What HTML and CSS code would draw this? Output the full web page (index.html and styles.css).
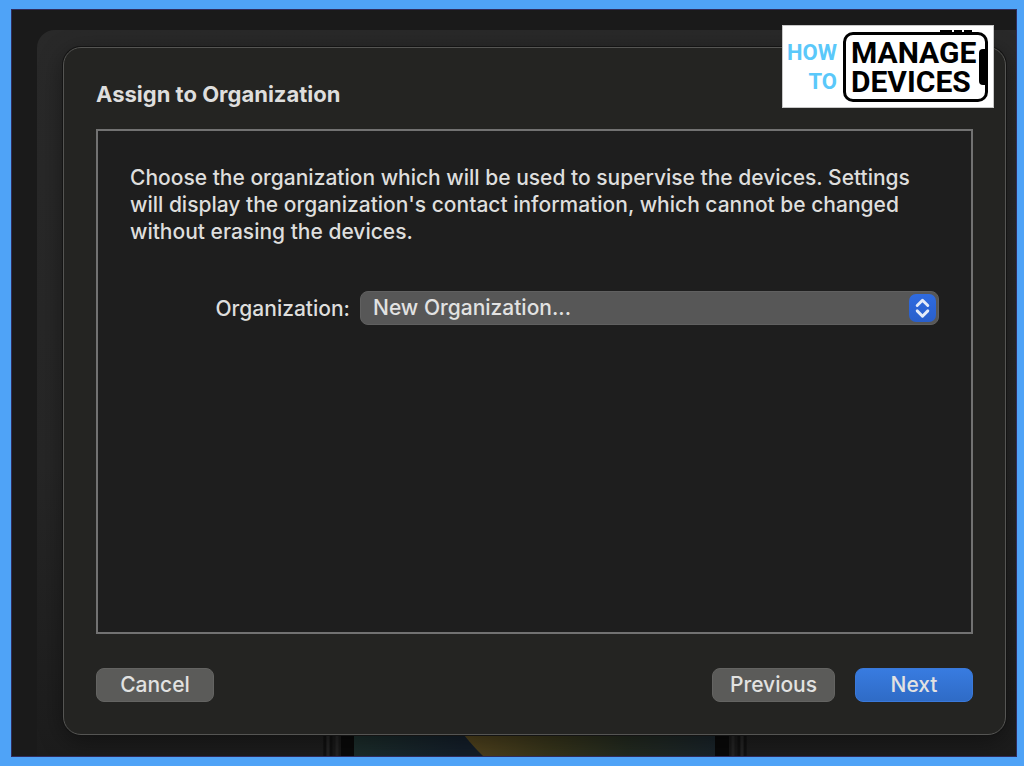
FILE: index.html
```
<!DOCTYPE html>
<html lang="en">

<head>
    <meta charset="UTF-8">
    <meta name="viewport" content="width=device-width, initial-scale=1.0">
    <title>Assign to Organization</title>
    <link rel="stylesheet" href="styles.css">
</head>

<body>

    <div class="desktop">
        <div class="window">

            <form class="dialog">
                <h1>Assign to Organization</h1>

                <div class="panel">
                    <p>Choose the organization which will be used to supervise the devices. Settings will display the organization's contact information, which cannot be changed without erasing the devices.</p>
                    <div class="field">
                        <label for="organization">Organization:</label>
                        <div class="select-box">
                            <select id="organization">
                                <option>New Organization...</option>
                            </select>
                            <svg class="stepper" viewBox="0 0 28 28" aria-hidden="true">
                                <path d="M8.5 11.5 L14 6 L19.5 11.5 M8.5 17 L14 22.5 L19.5 17" />
                            </svg>
                        </div>
                    </div>
                </div>

                <div class="buttons">
                    <button type="button" class="cancel">Cancel</button>
                    <button type="button" class="previous">Previous</button>
                    <button type="submit" class="next">Next</button>
                </div>
            </form>

            <!-- top of the phone behind the dialog -->
            <svg class="phone" viewBox="0 0 424 22" preserveAspectRatio="none" aria-hidden="true">
                <defs>
                    <linearGradient id="teal">
                        <stop offset="0" stop-color="#1b2c2a" />
                        <stop offset="0.3" stop-color="#141e29" />
                    </linearGradient>
                    <linearGradient id="gold">
                        <stop offset="0" stop-color="#50421d" />
                        <stop offset="0.35" stop-color="#35331a" />
                        <stop offset="0.65" stop-color="#22291f" />
                        <stop offset="1" stop-color="#192329" />
                    </linearGradient>
                </defs>
                <rect width="424" height="22" fill="#181818" />
                <path d="M2 0V22M8 0V22M416 0V22M422 0V22" stroke="#101010" stroke-width="3" />
                <path d="M5 0V22M14 0V22M410 0V22M419 0V22" stroke="#232323" stroke-width="3" />
                <rect x="18" width="388" height="22" fill="#090909" />
                <rect x="31" width="361" height="22" fill="url(#teal)" />
                <path d="M141 0 Q151 13 160 22 H392 V0 Z" fill="url(#gold)" />
            </svg>

        </div>
    </div>

    <div class="logo">
        <div class="logo-left">
            <span>HOW</span>
            <span>TO</span>
        </div>
        <div class="logo-right">
            <span>MANAGE</span>
            <span>DEVICES</span>
        </div>
    </div>

</body>

</html>
```
FILE: styles.css
```
* {
    padding: 0;
    margin: 0;
    box-sizing: border-box;
}

body {
    min-height: 100vh;
    display: flex;
    padding: 9px 7px 9px 11px;
    background-color: #4fa3f7;
    color: #dededd;
    font-family: Inter, "Liberation Sans", sans-serif;
    font-size: 21px;
    font-weight: 500;
    line-height: 27px;
}

.desktop {
    flex: 1;
    display: flex;
    padding: 20px 0 0 25px;
    border: 1px solid #302c5c;
    background-color: #1a1a1a;
}

.window {
    flex: 1;
    display: flex;
    flex-direction: column;
    align-items: center;
    padding: 17px 10px 0 26px;
    border-radius: 18px 0 0 0;
    background: linear-gradient(#292929, #262626 60%, #1c1c1c);
    overflow: hidden;
}

.dialog {
    position: relative;
    width: 100%;
    flex: 1;
    display: flex;
    flex-direction: column;
    padding: 33px 32px 32px;
    border: 1px solid #555553;
    border-radius: 18px;
    background-color: #242422;
    box-shadow: 0 0 0 1px #141414, 0 6px 24px rgba(0, 0, 0, 0.4);
}

h1 {
    margin-bottom: 21px;
    font-size: 22px;
    line-height: 27px;
    font-weight: 700;
}

.panel {
    flex: 1;
    padding: 33px 32px 32px;
    border: 2px solid #727272;
    background-color: #1e1e1e;
}

.field {
    display: flex;
    align-items: center;
    margin-top: 46px;
}

.field label {
    width: 220px;
    margin-right: 10px;
    text-align: right;
}

.select-box {
    position: relative;
    flex: 1;
}

select {
    appearance: none;
    display: block;
    width: 100%;
    height: 34px;
    padding: 0 40px 2px 12px;
    border: 1px solid #606060;
    border-radius: 8px;
    background-color: #575757;
    color: #e2e2e2;
    font: inherit;
}

.stepper {
    position: absolute;
    top: 3px;
    right: 3px;
    width: 27px;
    height: 28px;
    border-radius: 7px;
    background: linear-gradient(#2f6be0, #295fcb);
    fill: none;
    stroke: #e4ebf8;
    stroke-width: 3;
    stroke-linecap: round;
    stroke-linejoin: round;
    pointer-events: none;
}

.buttons {
    display: flex;
    gap: 20px;
    margin-top: 34px;
}

button {
    width: 118px;
    height: 34px;
    padding-bottom: 2px;
    border: 1px solid #646462;
    border-radius: 8px;
    background-color: #5b5b59;
    color: #e2e2e1;
    font: inherit;
}

.cancel {
    margin-right: auto;
}

.previous {
    width: 123px;
}

.next {
    border-color: #3a79da;
    background: linear-gradient(#387be0, #2f6bc6);
}

.phone {
    width: 424px;
    height: 21px;
}

.logo {
    position: absolute;
    top: 25px;
    right: 30px;
    width: 212px;
    height: 83px;
    display: flex;
    justify-content: space-between;
    padding: 6px 5px 5px 4px;
    border: 1px solid #c8c8c8;
    background-color: #fff;
    color: #000;
    font-family: Roboto, "Liberation Sans", sans-serif;
    font-weight: bold;
}

.logo-left,
.logo-right {
    display: flex;
    flex-direction: column;
    justify-content: center;
    line-height: 29px;
}

.logo-left {
    align-items: flex-end;
    color: #5ac8fa;
    font-size: 22px;
}

.logo-right {
    position: relative;
    width: 145px;
    padding-left: 5px;
    border: 3px solid #000;
    border-radius: 10px;
    font-size: 30px;
}

/* phone notch and side buttons */
.logo-right::before {
    content: "";
    position: absolute;
    right: -1px;
    top: 14px;
    width: 7px;
    height: 36px;
    border-radius: 4px 0 0 4px;
    background-color: #000;
}

.logo-right::after {
    content: "";
    position: absolute;
    right: 13px;
    top: -5px;
    width: 32px;
    height: 2px;
    background: linear-gradient(90deg, #000 12px, #fff 12px, #fff 14px, #000 14px, #000 22px, #fff 22px, #fff 24px, #000 24px);
}
```
